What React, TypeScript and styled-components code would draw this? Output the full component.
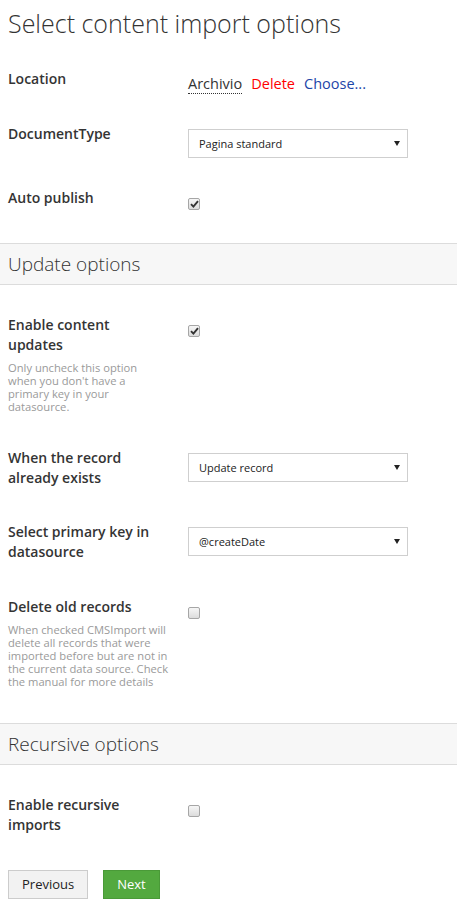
import React from "react";
import styled, { createGlobalStyle } from "styled-components";

const GlobalStyle = createGlobalStyle`
  html, body {
    margin: 0;
    padding: 0;
    background: #fff;
  }
  body {
    font-family: "Open Sans", "DejaVu Sans", sans-serif;
    color: #343434;
  }
`;

const Page = styled.div`
  width: 457px;
  padding-bottom: 4px;
`;

const Title = styled.h1`
  margin: 0 0 30px;
  padding: 7px 8px 0;
  font-size: 25px;
  font-weight: 300;
  line-height: 32px;
  color: #333;
`;

const Row = styled.div<{ $after: number }>`
  display: grid;
  grid-template-columns: 160px 1fr;
  column-gap: 20px;
  padding: 0 8px;
  margin-bottom: ${(p) => p.$after}px;
`;

const LabelCol = styled.div`
  display: flex;
  flex-direction: column;
`;

const Label = styled.label`
  display: block;
  max-width: 155px;
  font-size: 14px;
  font-weight: 600;
  line-height: 20px;
  color: #343434;
`;

const Help = styled.small`
  display: block;
  margin-top: 6px;
  font-size: 11.2px;
  line-height: 13px;
  color: #9a9a9a;
  white-space: nowrap;
`;

const Controls = styled.div`
  display: flex;
  align-items: flex-start;
`;

const LinkLine = styled.div`
  display: flex;
  gap: 9px;
  padding-top: 5px;
  font-size: 14.5px;
  line-height: 20px;
`;

const NodeName = styled.span`
  color: #333;
  border-bottom: 1px dotted #333;
  line-height: 19px;
`;

const ActionLink = styled.a<{ $tone: "red" | "blue" }>`
  color: ${(p) => (p.$tone === "red" ? "#ff0000" : "#1d45a8")};
  text-decoration: none;
  cursor: pointer;
`;

const SelectBox = styled.div`
  position: relative;
  box-sizing: border-box;
  width: 220px;
  height: 29px;
  margin-top: 5px;
  padding: 0 10px;
  border: 1px solid #cfcfcf;
  background: #fff;
  font-size: 11px;
  line-height: 27px;
  color: #222;
`;

const Arrow = styled.span`
  position: absolute;
  right: 7px;
  top: 11px;
  width: 0;
  height: 0;
  border-left: 3px solid transparent;
  border-right: 3px solid transparent;
  border-top: 5px solid #222;
`;

const Check = styled.span`
  display: flex;
  align-items: center;
  justify-content: center;
  box-sizing: border-box;
  width: 12px;
  height: 12px;
  margin-top: 10px;
  border: 1px solid #a6a6a6;
  border-radius: 2px;
  background: linear-gradient(#f6f6f6, #dcdcdc);
`;

const SectionHeader = styled.h3<{ $top: number }>`
  box-sizing: border-box;
  height: 42px;
  margin: ${(p) => p.$top}px 0 30px;
  padding: 0 8px;
  border-top: 1px solid #dcdcdc;
  border-bottom: 1px solid #dcdcdc;
  background: #f7f7f7;
  font-size: 19px;
  font-weight: 300;
  line-height: 40px;
  color: #333;
`;

const Buttons = styled.div`
  display: flex;
  gap: 15px;
  padding: 0 8px;
`;

const Button = styled.button<{ $primary?: boolean }>`
  box-sizing: border-box;
  height: 29px;
  padding: 0 13px;
  border: 1px solid ${(p) => (p.$primary ? "#4a9a38" : "#cccccc")};
  background: ${(p) => (p.$primary ? "#53a93f" : "#f2f2f2")};
  color: ${(p) => (p.$primary ? "#fff" : "#222")};
  font-family: "Open Sans", "DejaVu Sans", sans-serif;
  font-size: 13px;
  line-height: 27px;
  cursor: pointer;
`;

const Checkbox: React.FC<{ checked?: boolean }> = ({ checked }) => (
  <Check>
    {checked && (
      <svg width="9" height="8" viewBox="0 0 9 8">
        <path d="M1 4.2 L3.4 6.6 L8 1.2" fill="none" stroke="#333" strokeWidth="1.9" />
      </svg>
    )}
  </Check>
);

const Select: React.FC<{ value: string }> = ({ value }) => (
  <SelectBox>
    {value}
    <Arrow />
  </SelectBox>
);

// help text keeps the line breaks of the original narrow column
const HelpText: React.FC<{ lines: string[] }> = ({ lines }) => (
  <Help>
    {lines.map((line, i) => (
      <React.Fragment key={i}>
        {i > 0 && <br />}
        {line}
      </React.Fragment>
    ))}
  </Help>
);

const App: React.FC = () => {
  return (
    <Page>
      <GlobalStyle />
      <Title>Select content import options</Title>

      <Row $after={30}>
        <Label>Location</Label>
        <Controls>
          <LinkLine>
            <NodeName>Archivio</NodeName>
            <ActionLink $tone="red">Delete</ActionLink>
            <ActionLink $tone="blue">Choose...</ActionLink>
          </LinkLine>
        </Controls>
      </Row>

      <Row $after={30}>
        <Label>DocumentType</Label>
        <Controls>
          <Select value="Pagina standard" />
        </Controls>
      </Row>

      <Row $after={0}>
        <Label>Auto publish</Label>
        <Controls>
          <Checkbox checked />
        </Controls>
      </Row>

      <SectionHeader $top={33}>Update options</SectionHeader>

      <Row $after={35}>
        <LabelCol>
          <Label>Enable content updates</Label>
          <HelpText
            lines={[
              "Only uncheck this option",
              "when you don't have a",
              "primary key in your",
              "datasource.",
            ]}
          />
        </LabelCol>
        <Controls>
          <Checkbox checked />
        </Controls>
      </Row>

      <Row $after={34}>
        <Label>When the record already exists</Label>
        <Controls>
          <Select value="Update record" />
        </Controls>
      </Row>

      <Row $after={35}>
        <Label>Select primary key in datasource</Label>
        <Controls>
          <Select value="@createDate" />
        </Controls>
      </Row>

      <Row $after={0}>
        <LabelCol>
          <Label>Delete old records</Label>
          <HelpText
            lines={[
              "When checked CMSImport will",
              "delete all records that were",
              "imported before but are not in",
              "the current data source. Check",
              "the manual for more details",
            ]}
          />
        </LabelCol>
        <Controls>
          <Checkbox />
        </Controls>
      </Row>

      <SectionHeader $top={35}>Recursive options</SectionHeader>

      <Row $after={35}>
        <Label>Enable recursive imports</Label>
        <Controls>
          <Checkbox />
        </Controls>
      </Row>

      <Buttons>
        <Button>Previous</Button>
        <Button $primary>Next</Button>
      </Buttons>
    </Page>
  );
};

export default App;
